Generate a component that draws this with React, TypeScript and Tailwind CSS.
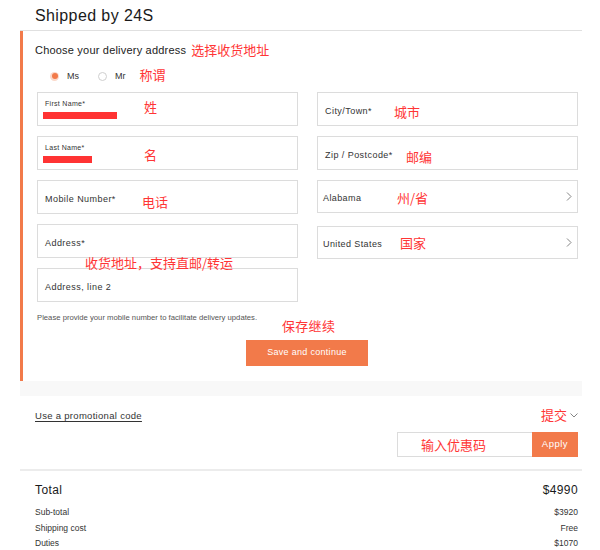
import type { ReactNode } from 'react';

// 结账页「配送地址」截图复刻,红字为截图上的中文标注

function Note({ children, className }: { children: ReactNode; className: string }) {
  return (
    <span
      className={`absolute whitespace-nowrap text-[13px] leading-[13px] text-[#ff3535] font-['Noto_Sans_CJK_SC',sans-serif] ${className}`}
    >
      {children}
    </span>
  );
}

function Chevron() {
  return (
    <svg width="6" height="9" viewBox="0 0 6 9" className="absolute right-[5px] top-[11px]">
      <polyline points="1,0.5 5,4.5 1,8.5" fill="none" stroke="#777" strokeWidth="0.9" />
    </svg>
  );
}

function Field({ label, children, h = 'h-[34px]' }: { label?: string; children?: ReactNode; h?: string }) {
  return (
    <div className={`relative ${h} border border-[#dcdcdc] flex items-center pl-[7px] pt-[5px] bg-white`}>
      {label && <span className="text-[9px] tracking-[0.45px] text-[#333]">{label}</span>}
      {children}
    </div>
  );
}

function StackedField({ label, bar }: { label: string; bar: string }) {
  return (
    <div className="relative h-[34px] border border-[#dcdcdc] pl-[7px] pt-[7px] bg-white">
      <div className="text-[7px] leading-[8px] tracking-[0.3px] text-[#333]">{label}</div>
      <div className={`-ml-[2px] mt-[4px] h-[7px] bg-[#ff3333] ${bar}`} />
    </div>
  );
}

export default function App() {
  return (
    <div className="w-[600px] h-[550px] overflow-hidden bg-white font-['Liberation_Sans','Noto_Sans_CJK_SC',sans-serif] text-[#222]">
      <div className="ml-[20px] w-[562px]">
        {/* 标题 */}
        <div className="h-[31px] border-b border-[#e0e0e0] pl-[15px] pt-[4px]">
          <span className="text-[16px] leading-[18px] tracking-[0.4px] text-[#1a1a1a]">Shipped by 24S</span>
        </div>

        {/* 地址表单 */}
        <div className="border-l-[3px] border-[#f27a4a] pl-[12px] pr-[4px] pt-[12px] pb-[15px]">
          <div className="flex items-center h-[14px]">
            <span className="text-[11px] tracking-[0.2px] text-[#222]">Choose your delivery address</span>
            <span className="ml-[5px] text-[13px] text-[#ff3535] font-['Noto_Sans_CJK_SC',sans-serif]">选择收货地址</span>
          </div>

          <div className="mt-[12px] h-[14px] flex items-center pl-[15px] text-[9px] text-[#333]">
            <span className="w-[9px] h-[9px] rounded-full bg-[#fbd9ca] flex items-center justify-center">
              <span className="w-[6px] h-[6px] rounded-full bg-[#f27a4a]" />
            </span>
            <span className="ml-[8px] pt-[2px]">Ms</span>
            <span className="ml-[19px] w-[9px] h-[9px] rounded-full border border-[#cfcfcf]" />
            <span className="ml-[8px] pt-[2px]">Mr</span>
            <span className="ml-[14px] -mt-[2px] text-[13px] text-[#ff3535] font-['Noto_Sans_CJK_SC',sans-serif]">称谓</span>
          </div>

          <div className="mt-[9px] ml-[2px] grid grid-cols-2 gap-x-[19px]">
            <div className="relative flex flex-col gap-[10px]">
              <div className="relative">
                <StackedField label="First Name*" bar="w-[74px]" />
                <Note className="left-[107px] top-[8px]">姓</Note>
              </div>
              <div className="relative">
                <StackedField label="Last Name*" bar="w-[49px]" />
                <Note className="left-[107px] top-[12px]">名</Note>
              </div>
              <Field label="Mobile Number*">
                <Note className="left-[104px] top-[14px]">电话</Note>
              </Field>
              <Field label="Address*" />
              <Field label="Address, line 2" />
              <Note className="left-[48px] top-[164px]">收货地址，支持直邮/转运</Note>
            </div>

            <div className="flex flex-col gap-[10px]">
              <Field label="City/Town*">
                <Note className="left-[76px] top-[12px]">城市</Note>
              </Field>
              <Field label="Zip / Postcode*">
                <Note className="left-[88px] top-[13px]">邮编</Note>
              </Field>
              <Field h="h-[33px]">
                <span className="-ml-[2px] text-[9px] tracking-[0.4px] text-[#333]">Alabama</span>
                <Note className="left-[79px] top-[10px]">州/省</Note>
                <Chevron />
              </Field>
              <div className="mt-[3px]">
                <Field h="h-[33px]">
                  <span className="-ml-[2px] text-[9px] tracking-[0.4px] text-[#333]">United States</span>
                  <Note className="left-[82px] top-[9px]">国家</Note>
                  <Chevron />
                </Field>
              </div>
            </div>
          </div>

          <p className="mt-[11px] ml-[2px] text-[7.7px] leading-[10px] text-[#555]">
            Please provide your mobile number to facilitate delivery updates.
          </p>

          <div className="mt-[17px] flex justify-center pl-[1px]">
            <button
              type="button"
              className="relative w-[122px] h-[26px] bg-[#f27a4a] text-white text-[9px] tracking-[0.3px]"
            >
              Save and continue
              <Note className="left-[36px] -top-[21px]">保存继续</Note>
            </button>
          </div>
        </div>

        {/* 优惠码 */}
        <div className="h-[15px] bg-[#f8f8f8]" />
        <div className="pl-[15px] pr-[4px] pt-[14px] pb-[12px] border-b-2 border-[#ececec]">
          <div className="relative flex items-center justify-between h-[12px]">
            <span className="text-[9.5px] tracking-[0.3px] text-[#333] underline underline-offset-2">Use a promotional code</span>
            <svg width="8" height="5" viewBox="0 0 8 5" className="-mt-[2px]">
              <polyline points="0.5,0.5 4,4 7.5,0.5" fill="none" stroke="#777" strokeWidth="0.9" />
            </svg>
            <Note className="right-[11px] top-[-2px]">提交</Note>
          </div>
          <div className="mt-[10px] flex justify-end">
            <div className="relative w-[135px] h-[25px] border border-[#dcdcdc] border-r-0">
              <Note className="left-[23px] top-[5px]">输入优惠码</Note>
            </div>
            <button type="button" className="w-[46px] h-[25px] bg-[#f27a4a] text-white text-[9.5px] tracking-[0.5px]">
              Apply
            </button>
          </div>
        </div>

        {/* 合计 */}
        <div className="pl-[15px] pr-[4px] pt-[11px]">
          <div className="flex justify-between items-center h-[16px] text-[12px] tracking-[0.4px] text-[#1a1a1a]">
            <span>Total</span>
            <span>$4990</span>
          </div>
          <div className="mt-[7px] text-[8.5px] leading-[15.5px] text-[#333]">
            <div className="flex justify-between"><span>Sub-total</span><span>$3920</span></div>
            <div className="flex justify-between"><span>Shipping cost</span><span>Free</span></div>
            <div className="flex justify-between"><span>Duties</span><span>$1070</span></div>
          </div>
        </div>
      </div>
    </div>
  );
}
